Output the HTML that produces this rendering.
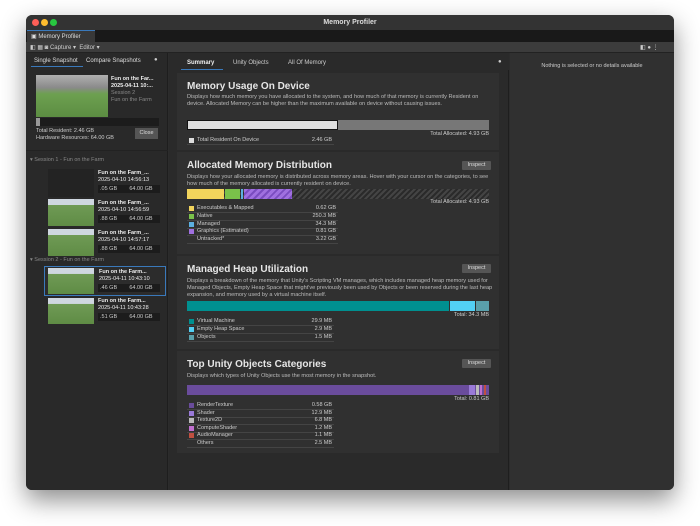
<!DOCTYPE html><html><head><style>
*{margin:0;padding:0;box-sizing:border-box}
body{width:700px;height:526px;background:#fff;font-family:"Liberation Sans",sans-serif;color:#ccc;font-size:6px;position:relative;overflow:hidden}
.a{position:absolute}
#win{left:26px;top:15px;width:648px;height:475px;background:#2c2c2c;border-radius:6px;overflow:hidden;box-shadow:0 10px 25px rgba(0,0,0,.45)}
.t{position:absolute;white-space:nowrap}
.sec{position:absolute;left:8px;width:322px;background:#303030}
.h{font-size:10px;font-weight:bold;color:#e6e6e6;left:10px}
.d{left:10px;font-size:5.6px;color:#bbb;line-height:7px;width:306px;white-space:normal}
.btn{position:absolute;right:8px;width:29px;height:9px;background:#555;color:#ddd;font-size:5.5px;text-align:center;line-height:9px;border-radius:1px}
.leg{position:absolute;left:10px;width:147px;border-bottom:1px solid #444;height:7.5px;font-size:5.5px;line-height:7px}
.leg i{position:absolute;left:2px;top:1px;width:5px;height:5px}
.leg span{position:absolute;left:10px}
.leg b{position:absolute;right:2px;font-weight:normal}
.thumb{position:absolute;background:linear-gradient(#cfd7e0 0,#cfd7e0 22%,#6f9a55 23%,#5f8c45 100%)}
.it{position:absolute;font-size:5.5px;line-height:7px}
.bar{position:absolute;background:#1c1c1c;height:8px}
</style></head><body>
<div id="win" class="a">
 <div class="a" style="left:0;top:0;width:648px;height:15px;background:#333"></div>
 <div class="a" style="left:6px;top:4px;width:7px;height:7px;border-radius:50%;background:#fe5f57"></div>
 <div class="a" style="left:15px;top:4px;width:7px;height:7px;border-radius:50%;background:#febc2e"></div>
 <div class="a" style="left:24px;top:4px;width:7px;height:7px;border-radius:50%;background:#28c840"></div>
 <div class="t" style="left:0;width:648px;text-align:center;top:4px;font-size:7px;font-weight:bold;color:#ddd">Memory Profiler</div>
 <div class="a" style="left:0;top:15px;width:648px;height:12px;background:#191919"></div>
 <div class="a" style="left:1px;top:15px;width:68px;height:12px;background:#383838;border-top:1px solid #3a79bb"></div>
 <div class="t" style="left:5px;top:18px;font-size:6px;color:#ddd">▣ Memory Profiler</div>
 <div class="a" style="left:0;top:27px;width:648px;height:11px;background:#3c3c3c;border-bottom:1px solid #222"></div>
 <div class="t" style="left:4px;top:29px;font-size:6px;color:#ccc">◧ ▦ ◙ Capture ▾ &nbsp;Editor ▾</div>
 <div class="t" style="left:614px;top:29px;font-size:6px;color:#ccc">◧ ● ⋮</div>
 <div class="a" style="left:0;top:38px;width:142px;height:437px;background:#292929;border-right:1px solid #1e1e1e"></div>
 <div class="t" style="left:8px;top:43px;font-size:6px;color:#ddd">Single Snapshot</div>
 <div class="a" style="left:5px;top:51px;width:52px;height:1px;background:#3a79bb"></div>
 <div class="t" style="left:60px;top:43px;font-size:6px;color:#ddd">Compare Snapshots</div>
 <div class="t" style="left:128px;top:42px;font-size:6px;color:#ccc">●</div>
 <div class="thumb" style="left:10px;top:60px;width:72px;height:42px;background:linear-gradient(#b0b0b0 0,#8a8a8a 30%,#6da050 45%,#5c8d42 100%)"></div>
 <div class="it" style="left:85px;top:61px;color:#eee;font-weight:bold">Fun on the Far...<br>2025-04-11 10:...</div>
 <div class="it" style="left:85px;top:75px;color:#888">Session 2<br>Fun on the Farm</div>
 <div class="bar" style="left:10px;top:103px;width:123px"></div>
 <div class="a" style="left:10px;top:103px;width:4px;height:8px;background:#999"></div>
 <div class="it" style="left:10px;top:113px;color:#ccc">Total Resident: 2.46 GB<br>Hardware Resources: 64.00 GB</div>
 <div class="a" style="left:109px;top:113px;width:23px;height:11px;background:#555;color:#ddd;font-size:5.5px;text-align:center;line-height:11px">Close</div>
 <div class="a" style="left:0;top:135px;width:142px;height:1px;background:#222"></div>
 <div class="t" style="left:4px;top:142px;font-size:5.5px;color:#888">▾ Session 1 - Fun on the Farm</div>
 <div class="a" style="left:22px;top:154px;width:46px;height:28px;background:#232323"></div>
 <div class="thumb" style="left:22px;top:184px;width:46px;height:27px"></div>
 <div class="thumb" style="left:22px;top:214px;width:46px;height:27px"></div>
 <div class="it" style="left:72px;top:155px;color:#eee"><b>Fun on the Farm_...</b><br>2025-04-10 14:56:13</div>
 <div class="bar" style="left:72px;top:170px;width:62px"></div><div class="it" style="left:74px;top:171px">.05 GB &nbsp;&nbsp;&nbsp;&nbsp;&nbsp;&nbsp;&nbsp;64.00 GB</div>
 <div class="it" style="left:72px;top:185px;color:#eee"><b>Fun on the Farm_...</b><br>2025-04-10 14:56:59</div>
 <div class="bar" style="left:72px;top:200px;width:62px"></div><div class="it" style="left:74px;top:201px">.88 GB &nbsp;&nbsp;&nbsp;&nbsp;&nbsp;&nbsp;&nbsp;64.00 GB</div>
 <div class="it" style="left:72px;top:215px;color:#eee"><b>Fun on the Farm_...</b><br>2025-04-10 14:57:17</div>
 <div class="bar" style="left:72px;top:230px;width:62px"></div><div class="it" style="left:74px;top:231px">.88 GB &nbsp;&nbsp;&nbsp;&nbsp;&nbsp;&nbsp;&nbsp;64.00 GB</div>
 <div class="t" style="left:4px;top:242px;font-size:5.5px;color:#888">▾ Session 2 - Fun on the Farm</div>
 <div class="a" style="left:18px;top:251px;width:122px;height:30px;border:1px solid #3a79bb;background:#2c2c2c"></div>
 <div class="thumb" style="left:22px;top:253px;width:46px;height:26px"></div>
 <div class="thumb" style="left:22px;top:283px;width:46px;height:26px"></div>
 <div class="it" style="left:73px;top:254px;color:#eee"><b>Fun on the Farm...</b><br>2025-04-11 10:43:10</div>
 <div class="bar" style="left:72px;top:269px;width:62px"></div><div class="it" style="left:74px;top:270px">.46 GB &nbsp;&nbsp;&nbsp;&nbsp;&nbsp;&nbsp;&nbsp;64.00 GB</div>
 <div class="it" style="left:72px;top:283px;color:#eee"><b>Fun on the Farm...</b><br>2025-04-11 10:43:28</div>
 <div class="bar" style="left:72px;top:298px;width:62px"></div><div class="it" style="left:74px;top:299px">.51 GB &nbsp;&nbsp;&nbsp;&nbsp;&nbsp;&nbsp;&nbsp;64.00 GB</div>
 <div class="a" style="left:143px;top:38px;width:340px;height:437px;background:#2a2a2a;border-right:1px solid #1e1e1e"></div>
 <div class="a" style="left:143px;top:38px;width:340px;height:17px;background:#2a2a2a"></div>
 <div class="t" style="left:161px;top:45px;font-size:6px;color:#eee;font-weight:bold">Summary</div>
 <div class="a" style="left:155px;top:54px;width:42px;height:1px;background:#3a79bb"></div>
 <div class="t" style="left:207px;top:45px;font-size:6px;color:#ccc">Unity Objects</div>
 <div class="t" style="left:262px;top:45px;font-size:6px;color:#ccc">All Of Memory</div>
 <div class="t" style="left:472px;top:44px;font-size:6px">●</div>
 <div class="a" style="left:143px;top:58px;width:340px;height:417px">
  <div class="sec" style="top:0;height:77px">
   <div class="t h" style="top:8px">Memory Usage On Device</div>
   <div class="t d" style="top:21px">Displays how much memory you have allocated to the system, and how much of that memory is currently Resident on device. Allocated Memory can be higher than the maximum available on device without causing issues.</div>
   <div class="a" style="left:10px;top:47px;width:302px;height:10px;background:#777"></div>
   <div class="a" style="left:10px;top:47px;width:151px;height:10px;background:#ddd;border:1px solid #111"></div>
   <div class="t" style="right:10px;top:58px;font-size:5.5px">Total Allocated: 4.93 GB</div>
   <div class="leg" style="top:64px"><i style="background:#ddd"></i><span>Total Resident On Device</span><b>2.46 GB</b></div>
  </div>
  <div class="sec" style="top:79px;height:102px">
   <div class="t h" style="top:8px">Allocated Memory Distribution</div>
   <div class="btn" style="top:9px">Inspect</div>
   <div class="t d" style="top:22px">Displays how your allocated memory is distributed across memory areas. Hover with your cursor on the categories, to see how much of the memory allocated is currently resident on device.</div>
   <div class="a" style="left:10px;top:37px;width:302px;height:10px;background:repeating-linear-gradient(135deg,#444 0 2px,#2a2a2a 2px 4px)"></div>
   <div class="a" style="left:10px;top:37px;width:37px;height:10px;background:#f2d45c"></div>
   <div class="a" style="left:48px;top:37px;width:15px;height:10px;background:#7ac14a"></div>
   <div class="a" style="left:64px;top:37px;width:2px;height:10px;background:#5cb0e0"></div>
   <div class="a" style="left:67px;top:37px;width:48px;height:10px;background:repeating-linear-gradient(135deg,#a070e0 0 3px,#7a4cc0 3px 5px)"></div>
   <div class="t" style="right:10px;top:47px;font-size:5.5px">Total Allocated: 4.93 GB</div>
   <div class="leg" style="top:53px;width:151px"><i style="background:#f2d45c"></i><span>Executables &amp; Mapped</span><b>0.62 GB</b></div>
   <div class="leg" style="top:61px;width:151px"><i style="background:#7ac14a"></i><span>Native</span><b>250.3 MB</b></div>
   <div class="leg" style="top:69px;width:151px"><i style="background:#5cb0e0"></i><span>Managed</span><b>34.3 MB</b></div>
   <div class="leg" style="top:76px;width:151px"><i style="background:#a070e0"></i><span>Graphics (Estimated)</span><b>0.81 GB</b></div>
   <div class="leg" style="top:84px;width:151px"><span>Untracked*</span><b>3.22 GB</b></div>
  </div>
  <div class="sec" style="top:183px;height:93px">
   <div class="t h" style="top:8px">Managed Heap Utilization</div>
   <div class="btn" style="top:8px">Inspect</div>
   <div class="t d" style="top:22px">Displays a breakdown of the memory that Unity's Scripting VM manages, which includes managed heap memory used for Managed Objects, Empty Heap Space that might've previously been used by Objects or been reserved during the last heap expansion, and memory used by a virtual machine itself.</div>
   <div class="a" style="left:10px;top:45px;width:262px;height:10px;background:#009090"></div>
   <div class="a" style="left:273px;top:45px;width:25px;height:10px;background:#52d0f5"></div>
   <div class="a" style="left:299px;top:45px;width:13px;height:10px;background:#5aa0ab"></div>
   <div class="t" style="right:10px;top:56px;font-size:5.5px">Total: 34.3 MB</div>
   <div class="leg" style="top:62px"><i style="background:#009090"></i><span>Virtual Machine</span><b>29.9 MB</b></div>
   <div class="leg" style="top:70px"><i style="background:#52d0f5"></i><span>Empty Heap Space</span><b>2.9 MB</b></div>
   <div class="leg" style="top:78px"><i style="background:#5aa0ab"></i><span>Objects</span><b>1.5 MB</b></div>
  </div>
  <div class="sec" style="top:278px;height:102px">
   <div class="t h" style="top:8px">Top Unity Objects Categories</div>
   <div class="btn" style="top:8px">Inspect</div>
   <div class="t d" style="top:22px">Displays which types of Unity Objects use the most memory in the snapshot.</div>
   <div class="a" style="left:10px;top:34px;width:302px;height:10px;background:#6a4c9c"></div>
   <div class="a" style="left:292px;top:34px;width:6px;height:10px;background:#9a7ad8"></div>
   <div class="a" style="left:299px;top:34px;width:3px;height:10px;background:#bbb"></div>
   <div class="a" style="left:303px;top:34px;width:2px;height:10px;background:#c070d0"></div>
   <div class="a" style="left:307px;top:34px;width:2px;height:10px;background:#c05040"></div>
   <div class="t" style="right:10px;top:45px;font-size:5.5px">Total: 0.81 GB</div>
   <div class="leg" style="top:51px"><i style="background:#6a4c9c"></i><span>RenderTexture</span><b>0.58 GB</b></div>
   <div class="leg" style="top:59px"><i style="background:#9a7ad8"></i><span>Shader</span><b>12.9 MB</b></div>
   <div class="leg" style="top:66px"><i style="background:#bbb"></i><span>Texture2D</span><b>6.8 MB</b></div>
   <div class="leg" style="top:74px"><i style="background:#c070d0"></i><span>ComputeShader</span><b>1.2 MB</b></div>
   <div class="leg" style="top:81px"><i style="background:#c05040"></i><span>AudioManager</span><b>1.1 MB</b></div>
   <div class="leg" style="top:89px"><span>Others</span><b>2.5 MB</b></div>
  </div>
 </div>
 <div class="a" style="left:484px;top:38px;width:164px;height:437px;background:#303030"></div>
 <div class="t" style="left:484px;width:164px;text-align:center;top:48px;font-size:5.5px;color:#ccc">Nothing is selected or no details available</div>
</div>
</body></html>
